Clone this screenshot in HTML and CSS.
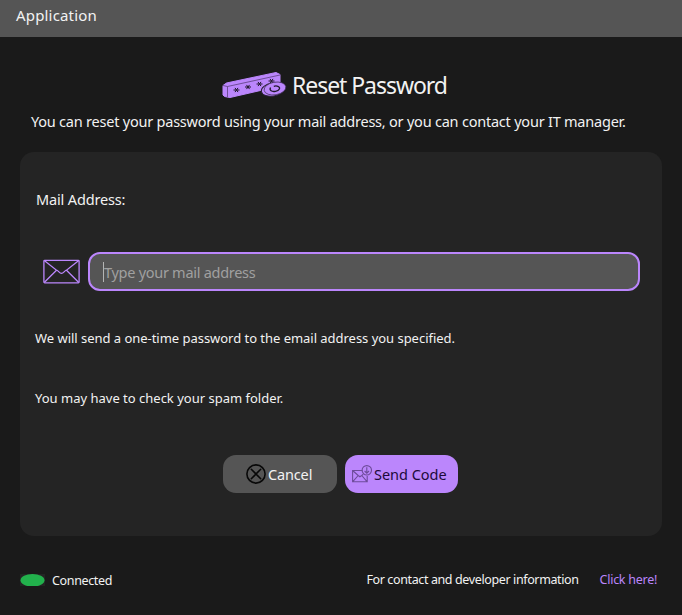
FILE: index.html
```html
<!DOCTYPE html>
<html lang="en">
<head>
<meta charset="utf-8">
<title>Reset Password</title>
<link rel="stylesheet" href="styles.css">
</head>
<body>
<header class="topbar">Application</header>
<main>
  <h1 class="title">
    <svg class="title-icon" width="66" height="30" viewBox="0 0 66 30" aria-hidden="true">
      <path d="M2 15.500 5.500 13 55 2.500 59 4.500V16L9 27.500 3.500 26.500 2 25Z" fill="#bb86fc" stroke="#bb86fc" stroke-width="1" stroke-linejoin="round"/>
      <path d="M2 15.500 6.500 16.500V27M6.500 16.500 59 5" fill="none" stroke="#5a3f7c" stroke-width=".8"/>
      <g stroke="#20182b" stroke-width="1">
        <path d="M12.500 20h6M14 17.900l3 4.200M17 17.900l-3 4.200"/>
        <path d="M24 17h6M25.500 14.900l3 4.200M28.500 14.900l-3 4.200"/>
        <path d="M35.500 14h6M37 11.900l3 4.200M40 11.900l-3 4.200"/>
        <path d="M47.500 11h6M49 8.900l3 4.200M52 8.900l-3 4.200"/>
      </g>
      <ellipse cx="52" cy="19.500" rx="11.800" ry="6.500" transform="rotate(-10 52 19.500)" fill="#bb86fc" stroke="#2a2036" stroke-width="1"/>
      <ellipse cx="54" cy="18.500" rx="11" ry="6.300" transform="rotate(-10 54 18.500)" fill="#bb86fc" stroke="#3c2b52" stroke-width=".7"/>
      <path d="M49.500 17.500C48 20.500 51 22 54.500 21.300 58.500 20.500 60 17.500 57 16.300 55.500 15.800 54 15.900 52.800 16.300" fill="none" stroke="#20182b" stroke-width="1.300"/>
    </svg>
    <span>Reset Password</span>
  </h1>
  <p class="subtitle">You can reset your password using your mail address, or you can contact your IT manager.</p>
  <section class="card">
    <label class="label" for="mail">Mail Address:</label>
    <div class="field">
      <svg width="37" height="25" viewBox="0 0 37 25" fill="none" stroke="#bb86fc" stroke-width="1.300" aria-hidden="true">
        <rect x=".9" y="1.300" width="35.200" height="22.500" rx=".8"/>
        <path d="M1.200 1.600 13.500 11.200C15 11.200 16.500 14.400 18.500 14.400S22 11.200 23.500 11.200L35.800 1.600M13.500 11.300 1.200 23.500M23.500 11.300 35.800 23.500"/>
      </svg>
      <div class="input" id="mail"><span class="caret"></span><span class="placeholder">Type your mail address</span></div>
    </div>
    <p class="note note-otp">We will send a one-time password to the email address you specified.</p>
    <p class="note">You may have to check your spam folder.</p>
    <div class="actions">
      <button class="btn btn-cancel">
        <svg width="20" height="20" viewBox="0 0 20 20" fill="none" stroke="#080808" stroke-width="1.600" stroke-linecap="round" aria-hidden="true">
          <circle cx="10" cy="10" r="9.100"/><path d="m5.300 5.300 9.400 9.400M14.700 5.300l-9.400 9.400"/>
        </svg>
        <span>Cancel</span>
      </button>
      <button class="btn btn-send">
        <svg width="20" height="18" viewBox="0 0 20 18" fill="none" stroke="#6e4b9a" stroke-width="1.100" aria-hidden="true">
          <path d="M10.500 5.500H.6V16.800H15.200V11M.6 5.500 6.200 10.500 7.900 11.800 9.800 10.500 11.300 9.200M6.200 10.500.6 16.800M9.800 10.500 15.200 16.800"/>
          <circle cx="14.800" cy="5.300" r="4.700"/><path d="M14.800 2.200V8M12.600 6 14.800 8.200 17 6"/>
        </svg>
        <span>Send Code</span>
      </button>
    </div>
  </section>
</main>
<footer class="footer">
  <span class="status-dot"><svg width="25" height="12" viewBox="0 0 25 12"><ellipse cx="12.500" cy="6.300" rx="12" ry="6.300" fill="#22b14c"/></svg></span>
  <span class="status">Connected</span>
  <span class="contact">For contact and developer information</span>
  <a class="link">Click here!</a>
</footer>
</body>
</html>
```

FILE: styles.css
```css
* { box-sizing: border-box; }

body {
  margin: 0;
  height: 615px;
  overflow: hidden;
  background: #1a1a1a;
  color: #f2f2f2;
  font: 14.5px/20px "Noto Sans", "Open Sans", sans-serif;
  white-space: nowrap;
}

p, h1 { margin: 0; }
svg { display: block; flex: none; }

.topbar {
  height: 37px;
  padding: 5px 16px;
  background: #555;
  font-size: 15px;
  letter-spacing: .17px;
}

.title {
  display: flex;
  align-items: center;
  gap: 5px;
  height: 32px;
  margin: 32px 0 0 221px;
  font-size: 23px;
  line-height: 32px;
  font-weight: 400;
  letter-spacing: -1.05px;
}

.subtitle {
  margin: 10px 0 0 31px;
  letter-spacing: -.22px;
}

.card {
  display: flex;
  flex-direction: column;
  width: 642px;
  height: 384px;
  margin: 21px 0 0 20px;
  padding-top: 37px;
  background: #242424;
  border-radius: 14px;
}

.label { margin-left: 16px; letter-spacing: -.15px; }

.field {
  display: flex;
  align-items: center;
  gap: 8px;
  height: 39px;
  margin: 43px 22px 37px 23px;
}

.input {
  display: flex;
  align-items: center;
  flex: 1;
  height: 39px;
  padding-left: 12px;
  background: #555;
  border: 2.5px solid #bb86fc;
  border-radius: 12px;
}

.caret { width: 1px; height: 20px; margin-left: 1px; background: #b4b4b4; }
.placeholder { color: #a0a0a0; letter-spacing: -.28px; }

.note { margin: 0 0 40px 15px; font-size: 13px; }
.note-otp { letter-spacing: -.03px; }

.actions {
  display: flex;
  gap: 8px;
  margin: 7px 0 0 203px;
}

.btn {
  display: flex;
  align-items: center;
  height: 38px;
  padding: 0;
  border: 0;
  border-radius: 13px;
  font: inherit;
}

.btn-cancel { width: 114px; padding-left: 23px; gap: 2px; background: #555; color: #f2f2f2; letter-spacing: -.15px; }
.btn-send { width: 113px; padding-left: 7px; gap: 2px; background: #bb86fc; color: #1d0a3a; letter-spacing: -.02px; }

.footer {
  display: flex;
  align-items: center;
  height: 20px;
  margin: 34px 25px 0 20px;
  font-size: 12.5px;
}

.status-dot { background: #242424; }
.status { margin: 1px 0 0 7px; letter-spacing: -.35px; }
.contact { margin-left: auto; letter-spacing: -.38px; }
.link { margin-left: 21px; color: #bb86fc; letter-spacing: -.27px; }
```
